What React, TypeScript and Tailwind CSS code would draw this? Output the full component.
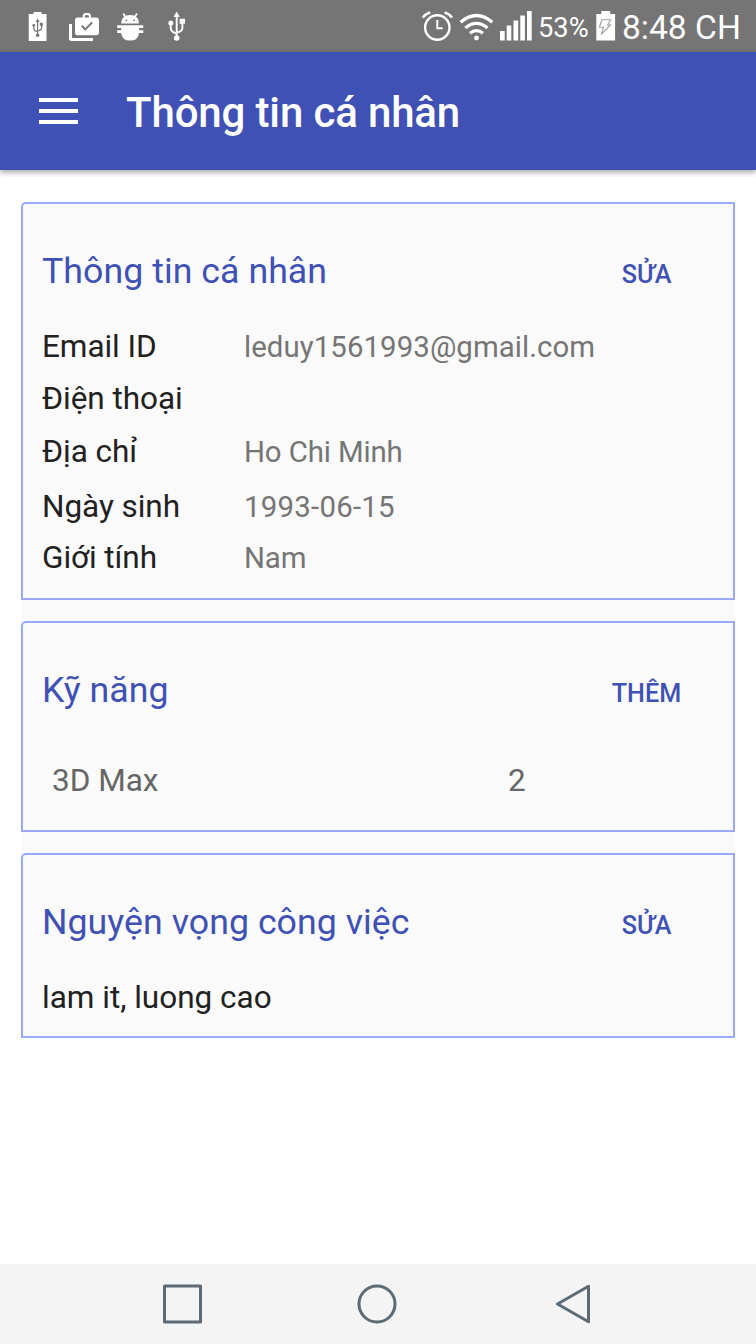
import type { ReactNode } from "react";

function StatusIcon({ className, viewBox, children }: { className: string; viewBox: string; children: ReactNode }) {
  return (
    <svg className={`h-[52px] shrink-0 ${className}`} viewBox={viewBox} fill="none">
      {children}
    </svg>
  );
}

function BatteryUsbIcon() {
  return (
    <StatusIcon className="ml-7 w-5" viewBox="28 0 20 52">
      <path d="M28.7 14h4.8v-2h8v2h5v27H28.7z" fill="#fff" />
      <g stroke="#757575" strokeWidth="1.2">
        <path d="M37.6 21v14M33.8 25.5v2.5q0 3 3.8 4M41.6 24v4q0 2-4 3" />
      </g>
      <g fill="#757575">
        <path d="M37.6 18.5l2 3.5h-4zM39.8 22.8h3v3h-3z" />
        <circle cx="33.8" cy="25.3" r="1.4" />
        <circle cx="37.6" cy="35.2" r="1.7" />
      </g>
    </StatusIcon>
  );
}

function BagCheckIcon() {
  return (
    <StatusIcon className="ml-5 w-8" viewBox="68 0 32 52">
      <path d="M69 24h3v14h21v3H71.500q-2.500 0-2.500-2.500z" fill="#fff" />
      <path
        fillRule="evenodd"
        d="M77.500 17.500h5.200V16q0-3 3-3h2.200q3 0 3 3v1.500h5.300q2.800 0 2.800 2.500v12.500q0 2.800-2.800 2.800H77.500q-2.500 0-2.500-2.800V20q0-2.500 2.500-2.500zM84.700 17.500h4.200V16.500q0-1.200-1-1.200h-2.200q-1 0-1 1.200z"
        fill="#fff"
      />
      <path d="M81.800 25.800l3.400 3.600 7-7" stroke="#757575" strokeWidth="2" />
    </StatusIcon>
  );
}

function BugIcon() {
  return (
    <StatusIcon className="ml-4 w-7" viewBox="116 0 28 52">
      <path d="M121.200 23.500q.3-8.500 8.900-8.500t8.900 8.500z" fill="#fff" />
      <path d="M123.200 13.500l2.600 4M137 13.500l-2.600 4" stroke="#fff" strokeWidth="1.700" />
      <circle cx="126.200" cy="20.300" r=".9" fill="#757575" />
      <circle cx="134" cy="20.300" r=".9" fill="#757575" />
      <path d="M117.200 25.200h26.100v2.700h-4.200v2.300h4.200v2.700h-4.200q-.8 7.500-9 7.700-8.200-.2-9-7.700h-3.900v-2.700h3.900v-2.300h-3.900z" fill="#fff" />
    </StatusIcon>
  );
}

function UsbIcon() {
  return (
    <StatusIcon className="ml-6 w-[18px]" viewBox="168 0 18 52">
      <path d="M176.700 15v23M170.700 24v4q0 4 6 5.500M182.400 21v7q0 3.500-5.700 4.500" stroke="#fff" strokeWidth="1.900" />
      <path d="M176.700 11.600l3.100 5.400h-6.200zM179.600 18.800h5.400v5h-5.400z" fill="#fff" />
      <circle cx="170.800" cy="23" r="2.500" fill="#fff" />
      <circle cx="176.700" cy="38" r="2.800" fill="#fff" />
    </StatusIcon>
  );
}

function AlarmIcon() {
  return (
    <StatusIcon className="w-[34px]" viewBox="420 0 34 52">
      <circle cx="437.300" cy="27.500" r="12.200" stroke="#fff" strokeWidth="2.400" />
      <path d="M437.300 20v8.200h5.400" stroke="#fff" strokeWidth="2" />
      <path d="M422.800 17.700q2.300-3.700 7.400-5.200M452 17.700q-2.300-3.700-7.400-5.200" stroke="#fff" strokeWidth="2.400" />
    </StatusIcon>
  );
}

function WifiIcon() {
  return (
    <StatusIcon className="ml-1 w-9" viewBox="458 0 36 52">
      <g stroke="#fff" strokeWidth="3.300">
        <path d="M460.600 22.300q15.800-13.600 31.700 0" />
        <path d="M465.400 28q11-9.300 22.100 0" />
        <path d="M470 33.300q6.500-5.300 13 0" />
      </g>
      <circle cx="476.500" cy="38" r="2.400" fill="#fff" />
    </StatusIcon>
  );
}

function SignalIcon() {
  return (
    <StatusIcon className="ml-1.5 w-8" viewBox="500 0 32 52">
      <path d="M500 31h4.700v9.500H500zM506.700 25.500h4.600v15h-4.600zM513.500 20.500h4.700v20h-4.700zM520.300 15.500h4.600v25h-4.600zM527 11h4.700v29.500H527z" fill="#fff" />
    </StatusIcon>
  );
}

function BatteryChargeIcon() {
  return (
    <StatusIcon className="w-5" viewBox="596 0 20 52">
      <path d="M596.300 14h5v-3h8.900v3h4.900v26.500h-18.800z" fill="#fff" />
      <path d="M601.800 19.800h8.800l-3 5.200h2.900l-9.200 9.300 2.100-7h-4z" stroke="#a0a0a0" strokeWidth="1.100" />
    </StatusIcon>
  );
}

function StatusBar() {
  return (
    <div className="flex h-[52px] shrink-0 items-center justify-between bg-[#757575] text-white">
      <div className="flex">
        <BatteryUsbIcon />
        <BagCheckIcon />
        <BugIcon />
        <UsbIcon />
      </div>
      <div className="flex w-[336px] items-center">
        <AlarmIcon />
        <WifiIcon />
        <SignalIcon />
        <span className="ml-1.5 w-[58px] pt-1 text-[27.300px] leading-[52px] whitespace-nowrap">53%</span>
        <BatteryChargeIcon />
        <span className="ml-1.5 pt-1 text-[33.600px] leading-[52px] whitespace-nowrap">8:48 CH</span>
      </div>
    </div>
  );
}

function AppBar() {
  return (
    <header className="relative flex h-[118px] shrink-0 items-center bg-[#3f51b5] text-white shadow-[0_2px_6px_rgba(0,0,0,0.4)]">
      <button className="ml-[39px] flex w-[39px] flex-col gap-[7px]" aria-label="Menu">
        <span className="h-1 w-full bg-white" />
        <span className="h-1 w-full bg-white" />
        <span className="h-1 w-full bg-white" />
      </button>
      <h1 className="ml-[48px] pt-[3px] text-[42px] leading-[50px] font-medium tracking-[-0.150px] whitespace-nowrap">Thông tin cá nhân</h1>
    </header>
  );
}

function Card({ title, action, className, children }: { title: string; action: string; className: string; children: ReactNode }) {
  return (
    <section className={`rounded-tl-[5px] border-2 border-[#9aa8ff] ${className}`}>
      <div className="flex items-baseline pl-[19px] leading-[50px]">
        <h2 className="w-[540px] text-[35.700px] tracking-[0.050px] whitespace-nowrap text-[#3f51b5]">{title}</h2>
        <button className="w-[129px] text-center text-[25.200px] font-medium text-[#3f51b5]">{action}</button>
      </div>
      {children}
    </section>
  );
}

function InfoRow({ label, value, className, valueClassName = "" }: { label: string; value: string; className: string; valueClassName?: string }) {
  return (
    <div className={`flex items-baseline pl-[19px] leading-[40px] whitespace-nowrap ${className}`}>
      <dt className="w-[202px] text-[31.500px] tracking-[-0.050px] text-[#212121]">{label}</dt>
      <dd className={`text-[29.400px] text-[#757575] ${valueClassName}`}>{value}</dd>
    </div>
  );
}

function NavBar() {
  return (
    <nav className="flex h-20 shrink-0 items-center bg-[#f4f4f4] pl-[162px]">
      <svg className="h-[42px] w-[42px]" viewBox="0 0 42 42" fill="none" stroke="#5c6b75" strokeWidth="3" strokeLinejoin="round">
        <rect x="2.500" y="3" width="36" height="36" />
      </svg>
      <svg className="ml-[152px] h-[42px] w-[42px]" viewBox="0 0 42 42" fill="none" stroke="#5c6b75" strokeWidth="3">
        <circle cx="21" cy="21" r="18" />
      </svg>
      <svg className="ml-[156px] h-[42px] w-[40px]" viewBox="0 0 40 42" fill="none" stroke="#5c6b75" strokeWidth="3" strokeLinejoin="round">
        <path d="M34.500 3.200v35.600L3.500 21z" />
      </svg>
    </nav>
  );
}

export default function App() {
  return (
    <div className="flex h-[1344px] w-[756px] flex-col overflow-hidden bg-white font-[Roboto,sans-serif]">
      <StatusBar />
      <AppBar />
      <main className="flex-1 px-[21px] pt-8">
        <div className="flex flex-col gap-[21px] bg-[#fafafa]">
          <Card title="Thông tin cá nhân" action="SỬA" className="h-[398px] pt-[42px]">
            <dl>
              <InfoRow label="Email ID" value="leduy1561993@gmail.com" className="mt-[27px] h-[52px]" valueClassName="tracking-[0.070px]" />
              <InfoRow label="Điện thoại" value="" className="h-[53px]" />
              <InfoRow label="Địa chỉ" value="Ho Chi Minh" className="h-[55px]" valueClassName="tracking-[-0.120px]" />
              <InfoRow label="Ngày sinh" value="1993-06-15" className="h-[51px]" valueClassName="tracking-[0.240px]" />
              <InfoRow label="Giới tính" value="Nam" className="h-[40px]" valueClassName="tracking-[-0.150px]" />
            </dl>
          </Card>
          <Card title="Kỹ năng" action="THÊM" className="h-[211px] pt-[42px]">
            <div className="mt-[42px] flex pl-[29px] text-[31.500px] leading-[40px] text-[#666666]">
              <span className="w-[456px]">3D Max</span>
              <span>2</span>
            </div>
          </Card>
          <Card title="Nguyện vọng công việc" action="SỬA" className="h-[185px] pt-[42px]">
            <p className="mt-[27px] pl-[19px] text-[31.500px] leading-[40px] text-[#212121]">lam it, luong cao</p>
          </Card>
        </div>
      </main>
      <NavBar />
    </div>
  );
}
